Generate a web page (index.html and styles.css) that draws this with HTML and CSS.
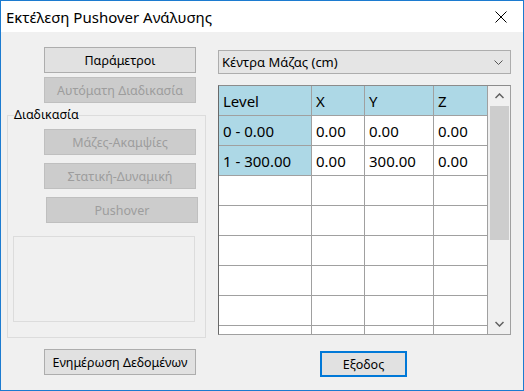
FILE: index.html
```html
<!DOCTYPE html>
<html lang="el">
<head>
    <meta charset="UTF-8">
    <title>Εκτέλεση Pushover Ανάλυσης</title>
    <link rel="stylesheet" href="styles.css">
</head>
<body>
    <div class="window">
        <!-- Title bar -->
        <div class="titlebar">
            <span class="title">Εκτέλεση Pushover Ανάλυσης</span>
            <svg class="close" width="12" height="12" viewBox="0 0 12 12">
                <path d="M0.5 0.5 L11.5 11.5 M11.5 0.5 L0.5 11.5" stroke="#000" stroke-width="1"/>
            </svg>
        </div>

        <div class="client">
            <!-- Left column -->
            <div class="left">
                <button class="btn first">Παράμετροι</button>
                <button class="btn" disabled>Αυτόματη Διαδικασία</button>

                <fieldset class="group">
                    <legend>Διαδικασία</legend>
                    <button class="btn" disabled>Μάζες-Ακαμψίες</button>
                    <button class="btn" disabled>Στατική-Δυναμική</button>
                    <button class="btn push" disabled>Pushover</button>
                    <div class="panel"></div>
                </fieldset>

                <button class="btn update">Ενημέρωση Δεδομένων</button>
            </div>

            <!-- Right column -->
            <div class="right">
                <div class="combo">
                    <span>Κέντρα Μάζας (cm)</span>
                    <svg width="9" height="5" viewBox="0 0 9 5">
                        <path d="M0.5 0.5 L4.5 4.5 L8.5 0.5" fill="none" stroke="#555" stroke-width="1"/>
                    </svg>
                </div>

                <div class="grid">
                    <table>
                        <tr class="head">
                            <td class="c1">Level</td><td class="c2">X</td><td class="c3">Y</td><td class="c4">Z</td>
                        </tr>
                        <tr>
                            <td class="rowhead">0 - 0.00</td><td>0.00</td><td>0.00</td><td>0.00</td>
                        </tr>
                        <tr>
                            <td class="rowhead">1 - 300.00</td><td>0.00</td><td>300.00</td><td>0.00</td>
                        </tr>
                        <tr><td></td><td></td><td></td><td></td></tr>
                        <tr><td></td><td></td><td></td><td></td></tr>
                        <tr><td></td><td></td><td></td><td></td></tr>
                        <tr><td></td><td></td><td></td><td></td></tr>
                        <tr><td></td><td></td><td></td><td></td></tr>
                        <tr><td></td><td></td><td></td><td></td></tr>
                    </table>
                    <div class="scrollbar">
                        <svg class="arrow" width="9" height="6" viewBox="0 0 9 6">
                            <path d="M0.5 5 L4.5 1 L8.5 5" fill="none" stroke="#606060" stroke-width="1.5"/>
                        </svg>
                        <div class="thumb"></div>
                        <div class="track"></div>
                        <svg class="arrow" width="9" height="6" viewBox="0 0 9 6">
                            <path d="M0.5 1 L4.5 5 L8.5 1" fill="none" stroke="#606060" stroke-width="1.5"/>
                        </svg>
                    </div>
                </div>

                <button class="btn exit">Εξοδος</button>
            </div>
        </div>
    </div>
</body>
</html>
```

FILE: styles.css
```css
/* Dialog window */
body {
    margin: 0;
    font-family: "Noto Sans", "Open Sans", sans-serif;
    font-size: 13px;
    color: #000;
    background: #fff;
}
.window {
    width: 524px;
    height: 391px;
    box-sizing: border-box;
    border: 1px solid #1c7bd0;
    background: #f0f0f0;
    display: flex;
    flex-direction: column;
}
.titlebar {
    height: 31px;
    background: #fff;
    display: flex;
    align-items: center;
    justify-content: space-between;
    padding: 0 16px 0 5px;
    flex-shrink: 0;
}
.title {
    font-size: 15px;
}
.client {
    display: flex;
    flex: 1;
}

/* Buttons */
.btn {
    display: block;
    width: 152px;
    height: 26px;
    font-family: inherit;
    font-size: 12.5px;
    background: #e1e1e1;
    border: 1px solid #adadad;
    color: #000;
    padding: 0;
    margin: 0 0 0 36px;
}
.btn:disabled {
    background: #cccccc;
    border-color: #bfbfbf;
    color: #9d9d9d;
}

/* Left column */
.left {
    width: 216px;
    padding-top: 15px;
}
.left > .btn {
    margin-left: 43px;
    margin-bottom: 4px;
}
.group {
    margin: 0 0 0 6px;
    width: 199px;
    box-sizing: border-box;
    border: 1px solid #dcdcdc;
    padding: 6px 0 15px 0;
}
.group legend {
    font-size: 12.5px;
    line-height: 16px;
    padding: 0;
    margin-left: 6px;
}
.group .btn {
    margin-bottom: 8px;
}
.group .push {
    margin-left: 38px;
    margin-bottom: 13px;
}
.panel {
    margin-left: 5px;
    width: 182px;
    height: 86px;
    box-sizing: border-box;
    border: 1px solid #dcdcdc;
}
.left > .update {
    margin-top: 11px;
}

/* Right column */
.right {
    flex: 1;
    padding-top: 18px;
    padding-left: 1px;
}
.combo {
    width: 293px;
    height: 24px;
    box-sizing: border-box;
    border: 1px solid #adadad;
    background: #e5e5e5;
    display: flex;
    align-items: center;
    justify-content: space-between;
    padding: 0 7px 0 3px;
}
.grid {
    margin-top: 11px;
    width: 293px;
    height: 250px;
    box-sizing: border-box;
    border: 1px solid #a0a0a0;
    border-left-color: #696969;
    border-top-color: #8c8c8c;
    background: #fff;
    display: flex;
    overflow: hidden;
}
table {
    border-collapse: collapse;
    table-layout: fixed;
    width: 268px;
    flex-shrink: 0;
    font-size: 15px;
    align-self: flex-start;
}
td {
    height: 29px;
    padding: 0 0 0 4px;
    border-right: 1px solid #a0a0a0;
    border-bottom: 1px solid #a0a0a0;
    white-space: nowrap;
}
.c1 { width: 88px; }
.c2 { width: 48px; }
.c3 { width: 64px; }
.c4 { width: 49px; }
.head td {
    background: #add8e6;
}
.rowhead {
    background: #add8e6;
}

/* Scrollbar */
.scrollbar {
    width: 22px;
    background: #f0f0f0;
    display: flex;
    flex-direction: column;
    align-items: center;
}
.arrow {
    margin: 7px 0;
}
.thumb {
    width: 19px;
    height: 134px;
    background: #cdcdcd;
}
.track {
    flex: 1;
}
.exit {
    margin: 16px 0 0 102px;
    width: 87px;
    height: 26px;
    border: 2px solid #0078d7;
}
```
